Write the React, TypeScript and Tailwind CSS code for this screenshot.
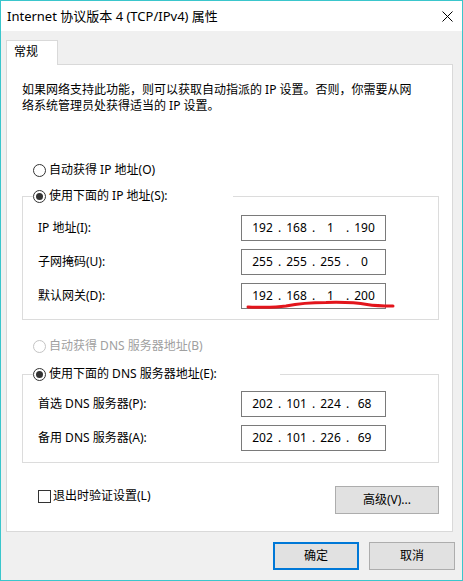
import React from "react";

const FONT = { fontFamily: '"Noto Sans", "Noto Sans CJK SC", sans-serif' };

/* ── Radio button ── */
function Radio({ checked, disabled, label }: { checked?: boolean; disabled?: boolean; label: string }) {
  return (
    <span className="flex items-center h-[16px]">
      <span
        className={
          "w-[13px] h-[13px] rounded-full border flex items-center justify-center bg-white flex-shrink-0 " +
          (disabled ? "border-[#c4c4c4]" : "border-[#333333]")
        }
      >
        {checked && <span className="w-[7px] h-[7px] rounded-full bg-[#333333]" />}
      </span>
      <span className={"ml-[3px] whitespace-nowrap " + (disabled ? "text-[#a0a0a0]" : "text-black")}>{label}</span>
    </span>
  );
}

/* ── IP address control ── */
function IpBox({ parts }: { parts: string[] }) {
  return (
    <div className="w-[145px] h-[26px] border border-[#7a7a7a] bg-white flex items-center pl-[8px]">
      {parts.map((p, i) => (
        <React.Fragment key={i}>
          {i > 0 && <span className="w-[9px] text-center">.</span>}
          <span className="w-[25px] text-center">{p}</span>
        </React.Fragment>
      ))}
    </div>
  );
}

function Row({ label, parts, mark }: { label: string; parts: string[]; mark?: boolean }) {
  return (
    <div className="flex items-center h-[26px]">
      <span className="w-[203px] whitespace-nowrap">{label}</span>
      <div className="relative">
        <IpBox parts={parts} />
        {mark && (
          <svg className="absolute left-0 top-[16px] pointer-events-none" width="160" height="14" viewBox="0 0 160 14">
            <path
              d="M7 8 C 20 8.5, 35 8.5, 45 7 C 55 5, 65 3.5, 85 3.5 C 105 3, 115 3.5, 126 5.5 C 135 7, 145 7, 152 7"
              fill="none"
              stroke="#e3151c"
              strokeWidth="3"
              strokeLinecap="round"
            />
          </svg>
        )}
      </div>
    </div>
  );
}

export default function App() {
  return (
    <div
      className="w-[463px] h-[581px] border border-[#3ac6cc] bg-[#f0f0f0] flex flex-col text-[12px] leading-[16px] text-black"
      style={FONT}
    >
      {/* ── Title bar ── */}
      <div className="h-[30px] bg-white flex items-center justify-between pl-[6px] pr-[9px] flex-shrink-0">
        <span className="whitespace-nowrap text-[13px]">Internet 协议版本 4 (TCP/IPv4) 属性</span>
        <svg width="11" height="11" viewBox="0 0 11 11">
          <path d="M0.5 0.5 L10.5 10.5 M10.5 0.5 L0.5 10.5" stroke="#000" strokeWidth="1" />
        </svg>
      </div>

      {/* ── Body ── */}
      <div className="flex-1 flex flex-col pt-[9px]">
        {/* Tab */}
        <div className="ml-[5px] w-[52px] h-[25px] -mb-px relative z-10 bg-white border-t border-x border-[#d9d9d9] pl-[7px] pt-[3px]">
          常规
        </div>

        {/* Panel */}
        <div className="ml-[5px] w-[447px] h-[468px] bg-white border border-[#d9d9d9] pt-[17px] pl-[15px] pr-[13px] flex flex-col">
          <p>如果网络支持此功能，则可以获取自动指派的 IP 设置。否则，你需要从网</p>
          <p>络系统管理员处获得适当的 IP 设置。</p>

          <div className="mt-[48px] ml-[11px]">
            <Radio label="自动获得 IP 地址(O)" />
          </div>

          <fieldset className="mt-[10px] border border-[#dcdcdc] pl-[15px] pt-[11px] pb-[10px] flex flex-col gap-[8px]">
            <legend className="-ml-[5px] w-[200px]">
              <Radio checked label="使用下面的 IP 地址(S):" />
            </legend>
            <Row label="IP 地址(I):" parts={["192", "168", "1", "190"]} />
            <Row label="子网掩码(U):" parts={["255", "255", "255", "0"]} />
            <Row label="默认网关(D):" parts={["192", "168", "1", "200"]} mark />
          </fieldset>

          <div className="mt-[18px] ml-[11px]">
            <Radio disabled label="自动获得 DNS 服务器地址(B)" />
          </div>

          <fieldset className="mt-[12px] border border-[#dcdcdc] pl-[15px] pt-[9px] pb-[11px] flex flex-col gap-[8px]">
            <legend className="-ml-[5px] w-[247px]">
              <Radio checked label="使用下面的 DNS 服务器地址(E):" />
            </legend>
            <Row label="首选 DNS 服务器(P):" parts={["202", "101", "224", "68"]} />
            <Row label="备用 DNS 服务器(A):" parts={["202", "101", "226", "69"]} />
          </fieldset>

          <div className="mt-[23px] flex items-start justify-between">
            <label className="ml-[16px] mt-[2px] flex items-center h-[16px]">
              <span className="w-[13px] h-[13px] border border-[#333333] bg-white" />
              <span className="ml-[2px]">退出时验证设置(L)</span>
            </label>
            <button className="w-[104px] h-[28px] bg-[#e1e1e1] border border-[#adadad]">高级(V)...</button>
          </div>
        </div>

        {/* Buttons */}
        <div className="mt-[10px] flex justify-end gap-[10px] pr-[7px]">
          <button className="w-[86px] h-[28px] bg-[#e1e1e1] border-2 border-[#0078d7]">确定</button>
          <button className="w-[86px] h-[28px] bg-[#e1e1e1] border border-[#adadad]">取消</button>
        </div>
      </div>
    </div>
  );
}
